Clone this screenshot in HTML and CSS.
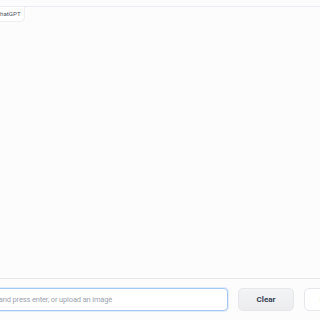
FILE: index.html
```html
<!DOCTYPE html>
<html lang="en">
<head>
    <meta charset="UTF-8">
    <meta name="viewport" content="width=device-width, initial-scale=1.0">
    <title>ChatGPT</title>
    <link rel="stylesheet" href="styles.css">
</head>
<body>
    <div class="app">
        <div class="chatbot">
            <span class="label">ChatGPT</span>
        </div>

        <div class="input-row">
            <div class="textbox">
                <span class="placeholder">Type your message and press enter, or upload an image</span>
            </div>
            <button class="btn btn-secondary">Clear</button>
            <button class="btn btn-upload">Upload</button>
        </div>
    </div>
</body>
</html>
```

FILE: styles.css
```css
html, body {
    margin: 0;
    padding: 0;
    height: 100%;
    overflow: hidden;
}
body {
    font-family: Roboto, "Lato", sans-serif;
    background-color: #fbfcfb;
}
.app {
    margin-left: -80px;
    width: 460px;
    padding-top: 6px;
}
.chatbot {
    position: relative;
    height: 271px;
    border-top: 1px solid #ececf6;
    border-bottom: 1px solid #e5e7eb;
}
.label {
    position: absolute;
    top: 0;
    left: 0;
    padding: 3px 3px 3px 76px;
    font-size: 6.2px;
    line-height: 8px;
    color: #4b5563;
    background: #ffffff;
    border-right: 1px solid #eeeef3;
    border-bottom: 1px solid #eeeef3;
    border-bottom-right-radius: 5px;
}
.input-row {
    display: flex;
    gap: 10px;
    margin-top: 9px;
}
.textbox {
    flex: 0 0 284px;
    height: 21px;
    display: flex;
    align-items: center;
    padding: 0 8px 0 14px;
    box-sizing: content-box;
    background: #ffffff;
    border: 1px solid #a8c8f4;
    border-radius: 4px;
    box-shadow: 0 0 0 1px #e0ebfb;
    font-size: 7.5px;
    letter-spacing: -0.15px;
    color: #9ca3af;
    white-space: nowrap;
}
.btn {
    flex: 0 0 56px;
    height: 23px;
    font-family: inherit;
    font-size: 8px;
    font-weight: 700;
    color: #374151;
    border-radius: 5px;
    padding: 0;
}
.btn-secondary {
    background: linear-gradient(#f3f4f6, #ececef);
    border: 1px solid #e5e7eb;
}
.btn-upload {
    background: #ffffff;
    border: 1px solid #e5e7eb;
    color: #d1d5db;
}
```
